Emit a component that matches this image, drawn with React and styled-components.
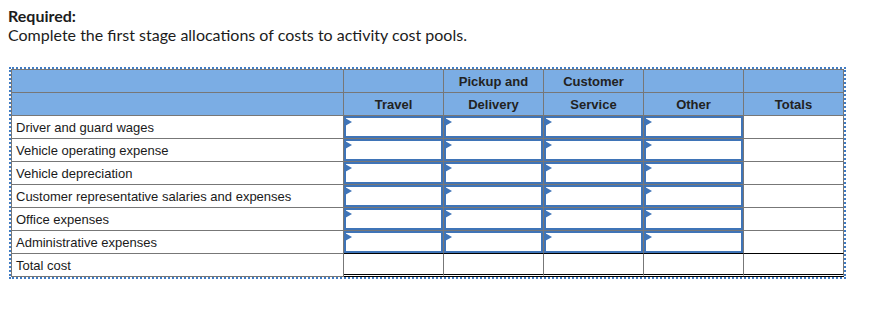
import React from "react";
import styled, { createGlobalStyle } from "styled-components";

const GlobalStyle = createGlobalStyle`
  body {
    margin: 0;
    background: #fff;
  }
`;

const Page = styled.div`
  padding: 6px 8px;
`;

const Heading = styled.div`
  font-family: Lato, "Open Sans", sans-serif;
  font-size: 16px;
  line-height: 19px;
  color: #1c1c1c;
`;

const Strong = styled.div`
  font-weight: 700;
`;

const Frame = styled.div`
  display: inline-block;
  margin: 23px 0 0 1px;
  border: 2px dotted #3f7bc4;
`;

const Grid = styled.div`
  display: grid;
  grid-template-columns: 332px repeat(5, 100px);
  grid-auto-rows: 23px;
  border-left: 1px solid #777;
  border-top: 1px solid #777;
  font-family: "Liberation Sans", Arial, sans-serif;
  font-size: 13px;
  color: #1a1a1a;
`;

const Cell = styled.div`
  box-sizing: border-box;
  border-right: 1px solid #777;
  border-bottom: ${(p) =>
    p.$double ? "3px double #000" : p.$dark ? "1px solid #000" : "1px solid #777"};
  background: #fff;
  position: relative;
`;

const HeadCell = styled(Cell)`
  background: #7badE4;
  font-weight: 700;
  color: #222;
  display: flex;
  align-items: center;
  justify-content: center;
  padding-top: 1px;
`;

const Label = styled(Cell)`
  display: flex;
  align-items: center;
  padding: 1px 0 0 4px;
  white-space: nowrap;
`;

const Entry = styled.input`
  box-sizing: border-box;
  display: block;
  width: 100%;
  height: 100%;
  margin: 0;
  padding: 0 4px;
  border: 2px solid #3f74b7;
  outline: none;
  background: #fff;
  font: inherit;
`;

const Flag = styled.span`
  position: absolute;
  left: 1px;
  top: 2px;
  width: 0;
  height: 0;
  border-top: 4px solid transparent;
  border-bottom: 4px solid transparent;
  border-left: 7px solid #3f74b7;
  pointer-events: none;
`;

const rows = [
  "Driver and guard wages",
  "Vehicle operating expense",
  "Vehicle depreciation",
  "Customer representative salaries and expenses",
  "Office expenses",
  "Administrative expenses",
];

const pools = ["Travel", "Pickup and Delivery", "Customer Service", "Other"];

export default function App() {
  return (
    <Page>
      <GlobalStyle />
      <Heading>
        <Strong>Required:</Strong>
        Complete the first stage allocations of costs to activity cost pools.
      </Heading>
      <Frame>
        <Grid>
          <HeadCell />
          <HeadCell />
          <HeadCell>Pickup and</HeadCell>
          <HeadCell>Customer</HeadCell>
          <HeadCell />
          <HeadCell />

          <HeadCell />
          <HeadCell>Travel</HeadCell>
          <HeadCell>Delivery</HeadCell>
          <HeadCell>Service</HeadCell>
          <HeadCell>Other</HeadCell>
          <HeadCell>Totals</HeadCell>

          {rows.map((r, i) => {
            const last = i === rows.length - 1;
            return (
              <React.Fragment key={r}>
                <Label>{r}</Label>
                {pools.map((p) => (
                  <Cell key={p} $dark={last}>
                    <Entry type="text" aria-label={`${r} ${p}`} />
                    <Flag />
                  </Cell>
                ))}
                <Cell $dark={last} />
              </React.Fragment>
            );
          })}

          <Label>Total cost</Label>
          {[...pools, "Totals"].map((p) => (
            <Cell key={p} $double />
          ))}
        </Grid>
      </Frame>
    </Page>
  );
}
